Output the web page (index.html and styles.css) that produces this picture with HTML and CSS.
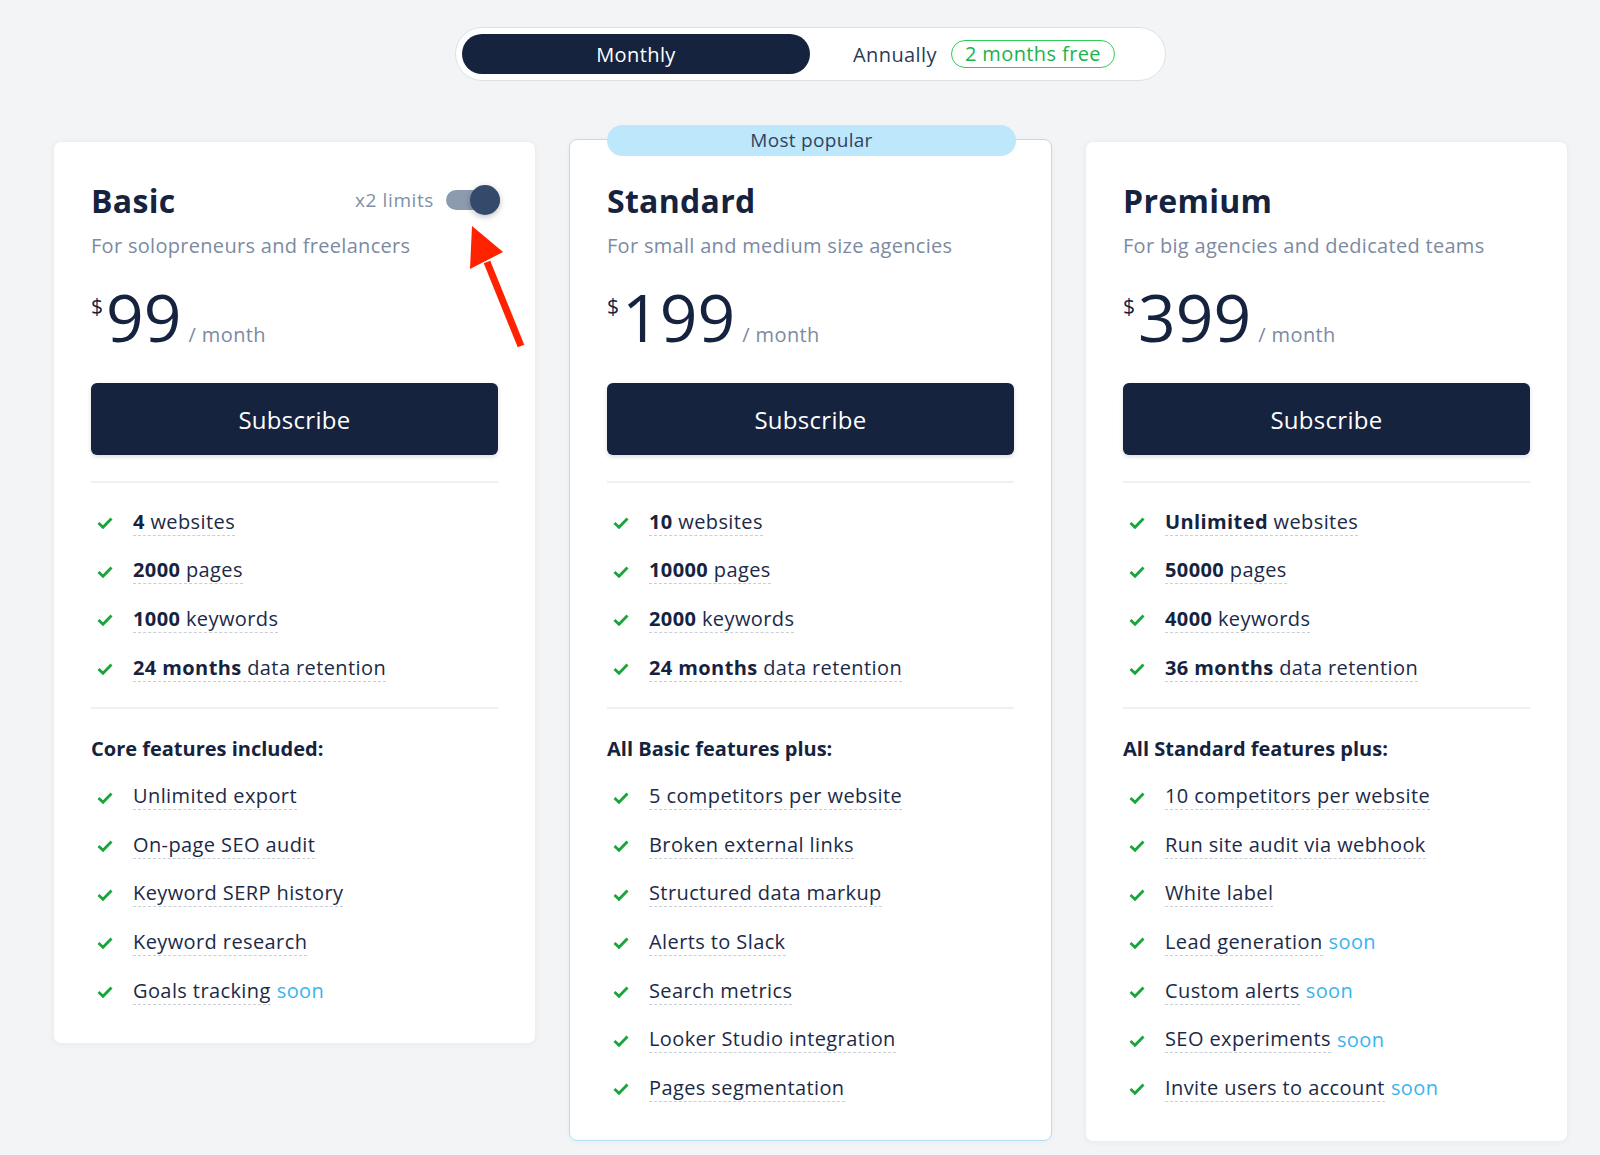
FILE: index.html
```html
<html>
<head>
    <link rel="stylesheet" href="styles.css">
</head>
<body>
    <div class="page">
        <div class="period">
            <div class="period-tabs">
                <span class="tab active">Monthly</span>
                <span class="tab">Annually <span class="free">2 months free</span></span>
            </div>
        </div>

        <div class="plans">
            <div class="plan">
                <div class="plan-head">
                    <h2>Basic</h2>
                    <div class="limits">
                        <span>x2 limits</span>
                        <span class="switch"><span class="knob"></span></span>
                    </div>
                </div>
                <p class="tagline">For solopreneurs and freelancers</p>
                <div class="price"><span class="cur">$</span><span class="amount">99</span><span class="per">/ month</span></div>
                <button class="subscribe">Subscribe</button>
                <ul class="items limits-list">
                    <li><i class="check"></i><span class="txt"><b>4</b> websites</span></li>
                    <li><i class="check"></i><span class="txt"><b>2000</b> pages</span></li>
                    <li><i class="check"></i><span class="txt"><b>1000</b> keywords</span></li>
                    <li><i class="check"></i><span class="txt"><b>24 months</b> data retention</span></li>
                </ul>
                <h3>Core features included:</h3>
                <ul class="items">
                    <li><i class="check"></i><span class="txt">Unlimited export</span></li>
                    <li><i class="check"></i><span class="txt">On-page SEO audit</span></li>
                    <li><i class="check"></i><span class="txt">Keyword SERP history</span></li>
                    <li><i class="check"></i><span class="txt">Keyword research</span></li>
                    <li><i class="check"></i><span class="txt">Goals tracking</span><span class="soon">soon</span></li>
                </ul>
            </div>

            <div class="plan popular">
                <div class="badge">Most popular</div>
                <div class="plan-head">
                    <h2>Standard</h2>
                </div>
                <p class="tagline">For small and medium size agencies</p>
                <div class="price"><span class="cur">$</span><span class="amount">199</span><span class="per">/ month</span></div>
                <button class="subscribe">Subscribe</button>
                <ul class="items limits-list">
                    <li><i class="check"></i><span class="txt"><b>10</b> websites</span></li>
                    <li><i class="check"></i><span class="txt"><b>10000</b> pages</span></li>
                    <li><i class="check"></i><span class="txt"><b>2000</b> keywords</span></li>
                    <li><i class="check"></i><span class="txt"><b>24 months</b> data retention</span></li>
                </ul>
                <h3>All Basic features plus:</h3>
                <ul class="items">
                    <li><i class="check"></i><span class="txt">5 competitors per website</span></li>
                    <li><i class="check"></i><span class="txt">Broken external links</span></li>
                    <li><i class="check"></i><span class="txt">Structured data markup</span></li>
                    <li><i class="check"></i><span class="txt">Alerts to Slack</span></li>
                    <li><i class="check"></i><span class="txt">Search metrics</span></li>
                    <li><i class="check"></i><span class="txt">Looker Studio integration</span></li>
                    <li><i class="check"></i><span class="txt">Pages segmentation</span></li>
                </ul>
            </div>

            <div class="plan">
                <div class="plan-head">
                    <h2>Premium</h2>
                </div>
                <p class="tagline">For big agencies and dedicated teams</p>
                <div class="price"><span class="cur">$</span><span class="amount">399</span><span class="per">/ month</span></div>
                <button class="subscribe">Subscribe</button>
                <ul class="items limits-list">
                    <li><i class="check"></i><span class="txt"><b>Unlimited</b> websites</span></li>
                    <li><i class="check"></i><span class="txt"><b>50000</b> pages</span></li>
                    <li><i class="check"></i><span class="txt"><b>4000</b> keywords</span></li>
                    <li><i class="check"></i><span class="txt"><b>36 months</b> data retention</span></li>
                </ul>
                <h3>All Standard features plus:</h3>
                <ul class="items">
                    <li><i class="check"></i><span class="txt">10 competitors per website</span></li>
                    <li><i class="check"></i><span class="txt">Run site audit via webhook</span></li>
                    <li><i class="check"></i><span class="txt">White label</span></li>
                    <li><i class="check"></i><span class="txt">Lead generation</span><span class="soon">soon</span></li>
                    <li><i class="check"></i><span class="txt">Custom alerts</span><span class="soon">soon</span></li>
                    <li><i class="check"></i><span class="txt">SEO experiments</span><span class="soon">soon</span></li>
                    <li><i class="check"></i><span class="txt">Invite users to account</span><span class="soon">soon</span></li>
                </ul>
            </div>
        </div>
    </div>

    <!-- annotation arrow pointing at the x2 switch -->
    <svg class="arrow" width="90" height="140" viewBox="0 0 90 140">
        <path d="M76 124 L42 40" stroke="#ff2200" stroke-width="7" fill="none" />
        <path d="M27 4 L25 47 L58 30 Z" fill="#ff2200" />
    </svg>
</body>
</html>
```

FILE: styles.css
```css
html,
body {
    margin: 0px;
    background: #f3f4f6;
    font-family: "Open Sans", "Noto Sans", sans-serif;
    color: #15233f;
}

.page {
    width: 1515px;
    margin-left: 53px;
    padding-top: 27px;
}

.period {
    display: flex;
    justify-content: center;
}

.period-tabs {
    display: flex;
    align-items: center;
    width: 697px;
    height: 40px;
    padding: 6px;
    background: #fff;
    border: 1px solid #dde1e7;
    border-radius: 27px;
}

.tab {
    display: flex;
    align-items: center;
    justify-content: center;
    height: 40px;
    font-size: 20px;
    letter-spacing: 0.4px;
    color: #2b3b5a;
}

.tab.active {
    width: 348px;
    border-radius: 20px;
    background: #15233f;
    color: #fff;
    font-weight: 500;
}

.tab + .tab {
    margin-left: 43px;
}

.free {
    margin-left: 14px;
    padding: 0 13px;
    height: 26px;
    line-height: 26px;
    border: 1.5px solid #2fcb5e;
    border-radius: 15px;
    color: #1bb34a;
}

.plans {
    display: flex;
    align-items: flex-start;
    gap: 33px;
    margin-top: 60px;
}

.plan {
    position: relative;
    width: 407px;
    padding: 39px 37px 27px 37px;
    background: #fff;
    border: 1px solid #eceef2;
    border-radius: 8px;
    box-shadow: 0 1px 6px rgba(20, 30, 60, 0.04);
}

.plan.popular {
    margin-top: -2px;
    padding-top: 41px;
    padding-bottom: 26px;
    border-color: #b1dff6;
}

.badge {
    position: absolute;
    top: -15px;
    left: 37px;
    width: 409px;
    height: 31px;
    line-height: 31px;
    text-align: center;
    background: #bde7fb;
    border-radius: 16px;
    font-size: 19px;
    letter-spacing: 0.3px;
    color: #33445f;
}

.plan-head {
    display: flex;
    align-items: center;
    justify-content: space-between;
    height: 38px;
}

h2 {
    margin: 0;
    font-size: 32px;
    font-weight: 700;
    letter-spacing: 0.3px;
    color: #15233f;
}

.limits {
    display: flex;
    align-items: center;
    gap: 12px;
    margin-right: -2px;
    font-size: 19px;
    letter-spacing: 0.6px;
    color: #8090a8;
}

.switch {
    position: relative;
    width: 54px;
    height: 20px;
    border-radius: 10px;
    background: #8d9bb0;
}

.knob {
    position: absolute;
    top: -5px;
    right: 0px;
    width: 30px;
    height: 30px;
    border-radius: 50%;
    background: #344a6b;
    box-shadow: 0 2px 6px rgba(0, 0, 0, 0.25);
}

.tagline {
    margin: 15px 0 0 0;
    line-height: 24px;
    font-size: 20px;
    letter-spacing: 0.3px;
    color: #7c8aa2;
}

.price {
    display: flex;
    align-items: baseline;
    height: 70px;
    margin-top: 23px;
}

.cur {
    align-self: flex-start;
    margin-top: 11px;
    font-size: 21px;
}

.amount {
    margin-left: 3px;
    font-size: 66px;
    line-height: 70px;
    font-weight: 400;
}

.per {
    margin-left: 7px;
    font-size: 20px;
    letter-spacing: 0.4px;
    color: #7c8aa2;
}

.subscribe {
    display: block;
    width: 100%;
    height: 72px;
    margin-top: 32px;
    border: 0;
    border-radius: 6px;
    background: #15233f;
    color: #fff;
    font-family: inherit;
    font-size: 24px;
    font-weight: 500;
    letter-spacing: 0.3px;
    box-shadow: 0 2px 4px rgba(20, 30, 60, 0.15);
}

.items {
    list-style: none;
    margin: 0;
    padding: 0;
}

.limits-list {
    margin-top: 26px;
    padding: 16px 0 14px 0;
    border-top: 2px solid #eef0f3;
    border-bottom: 2px solid #eef0f3;
}

.items li {
    display: flex;
    align-items: center;
    height: 48.6px;
    font-size: 20px;
    letter-spacing: 0.4px;
}

.check {
    width: 16px;
    height: 12px;
    margin: 0 20px 0 6px;
    background: no-repeat center / contain url("data:image/svg+xml,%3Csvg xmlns='http://www.w3.org/2000/svg' viewBox='0 0 16 12'%3E%3Cpath d='M1.5 6 L6 10.3 L14.5 1.5' fill='none' stroke='%2318a53a' stroke-width='2.8'/%3E%3C/svg%3E");
}

.txt {
    padding-bottom: 2px;
    border-bottom: 1.5px dashed #c8cfda;
    line-height: 22px;
    color: #1b2a47;
}

.txt b {
    font-weight: 700;
    color: #15233f;
}

.soon {
    margin-left: 6px;
    padding-bottom: 3px;
    color: #3ab4ee;
}

h3 {
    margin: 26px 0 10px 0;
    font-size: 20px;
    line-height: 28px;
    font-weight: 700;
}

.arrow {
    position: absolute;
    left: 445px;
    top: 222px;
    pointer-events: none;
}
```
